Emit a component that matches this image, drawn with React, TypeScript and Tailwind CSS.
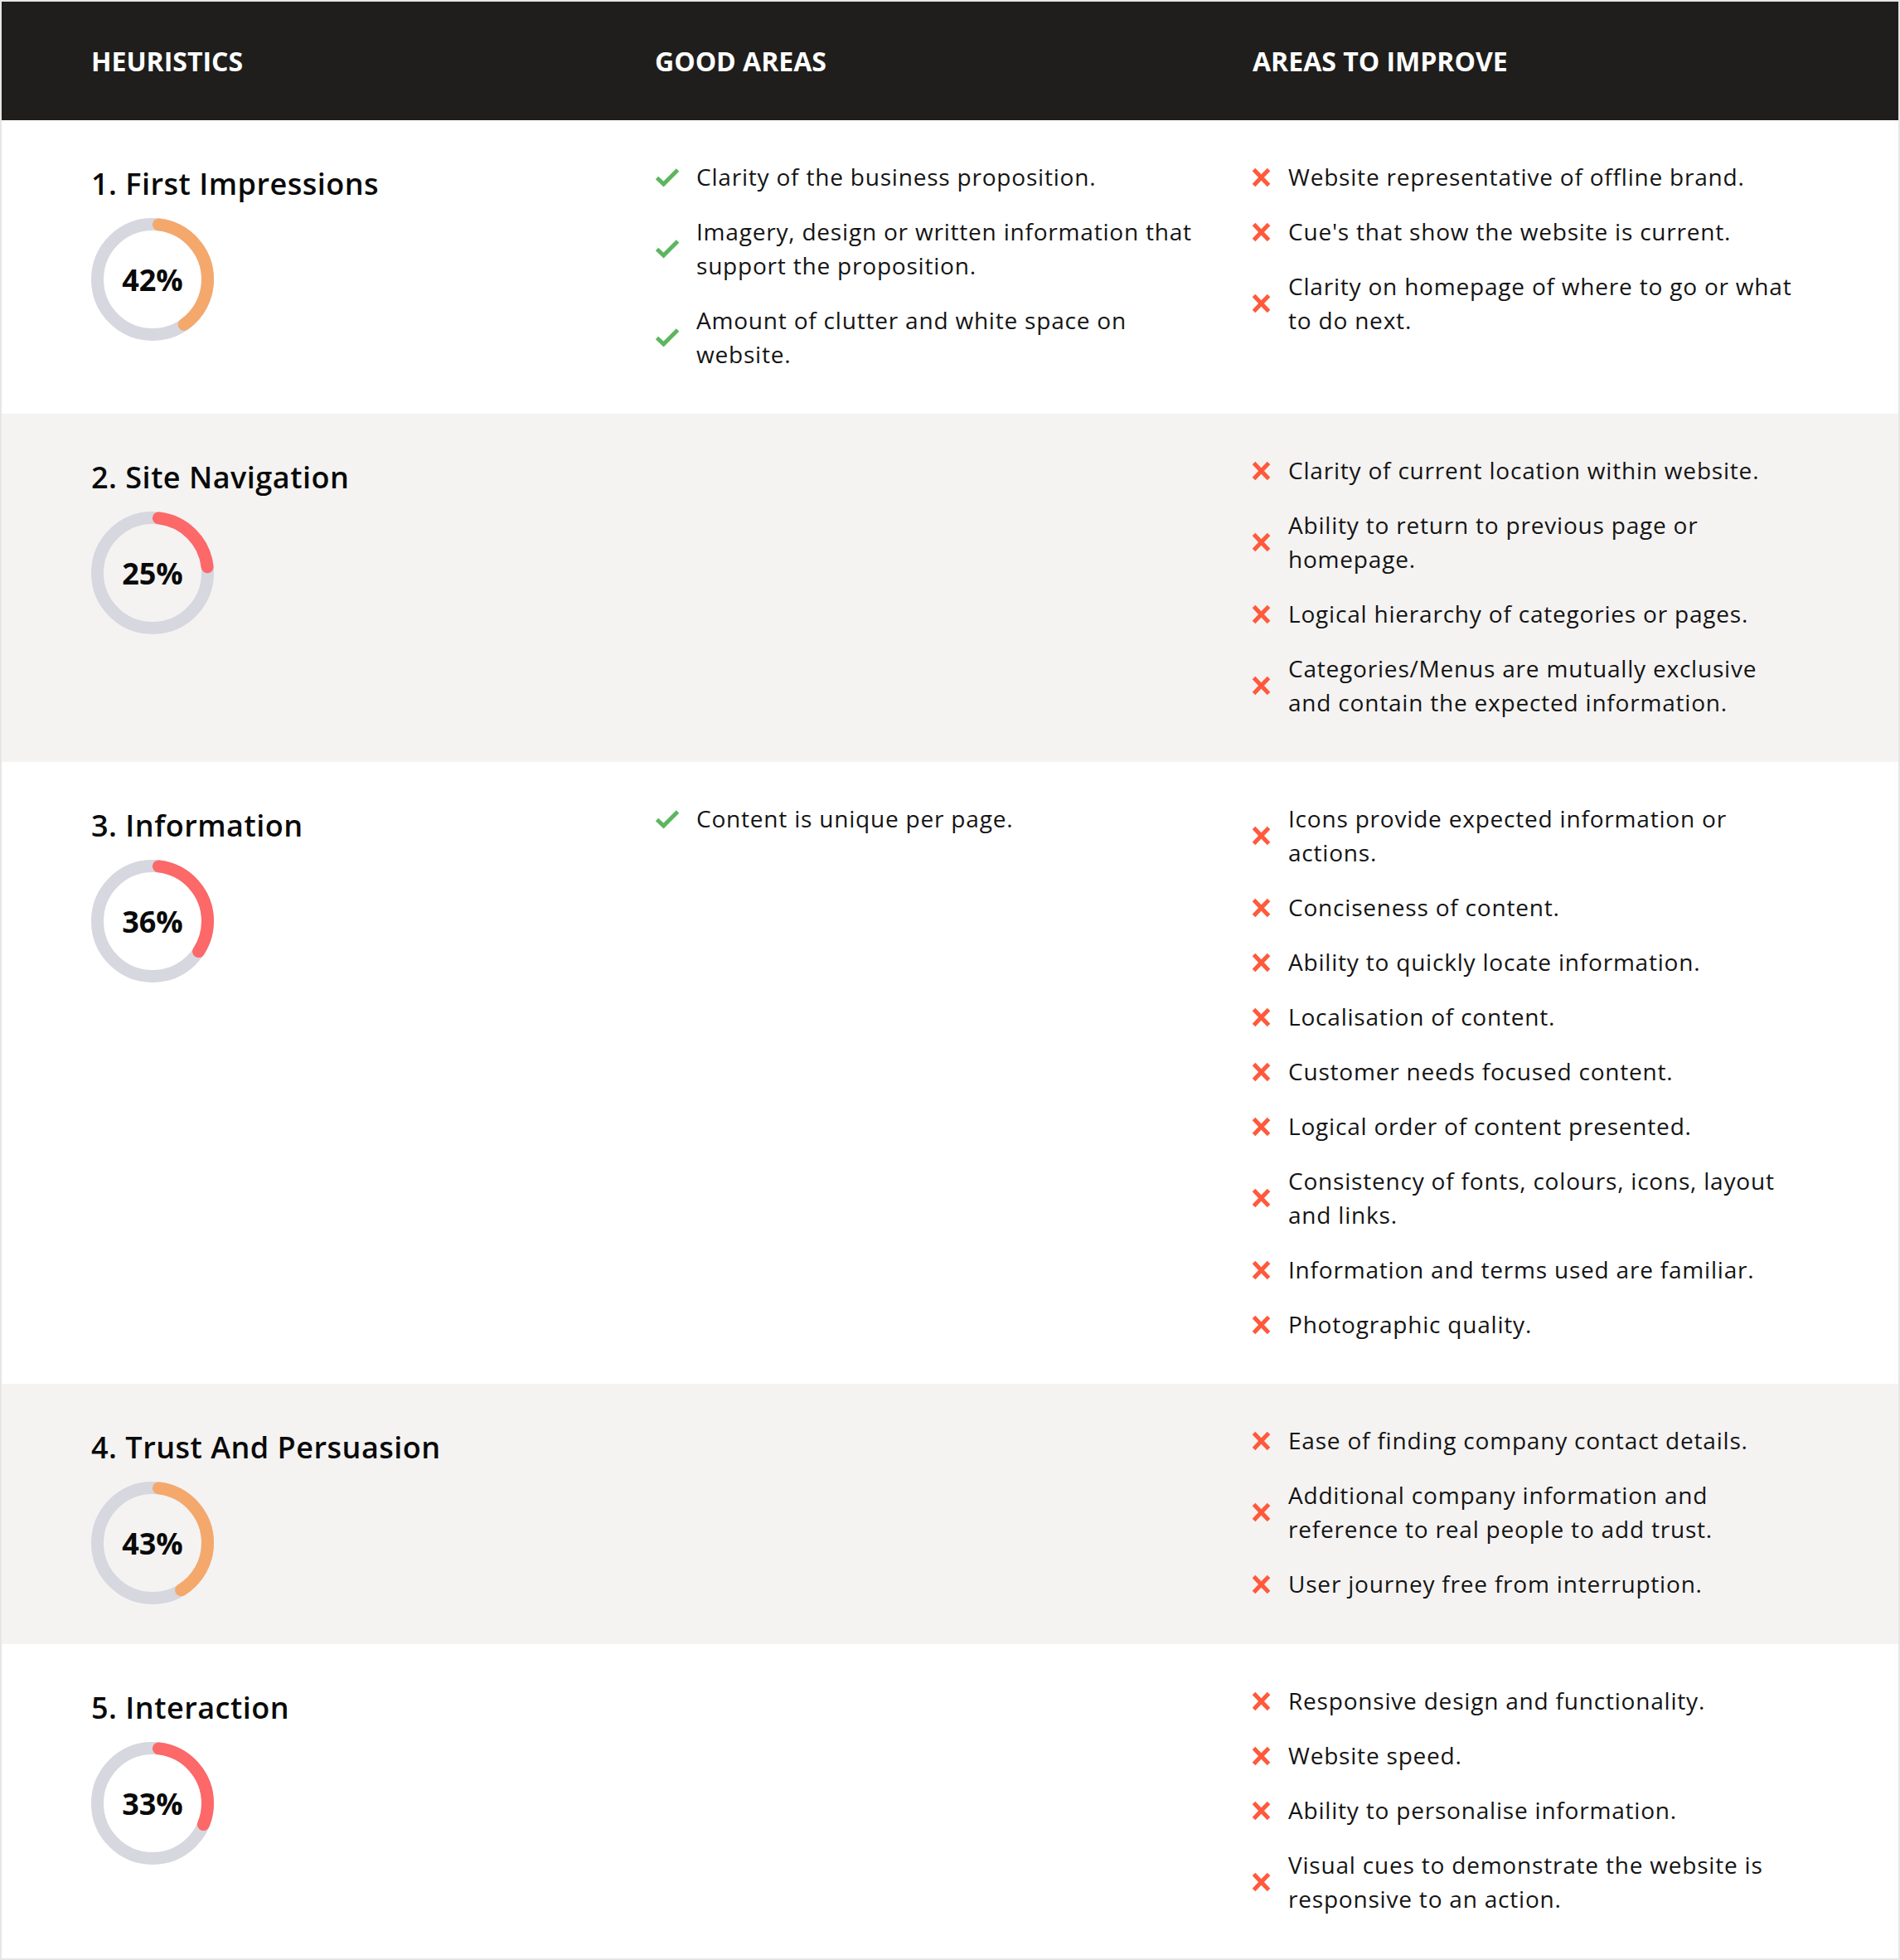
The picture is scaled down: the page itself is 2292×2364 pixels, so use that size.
import React from "react";

type Row = {
  title: string;
  pct: number;
  good: string[][];
  improve: string[][];
};

const rows: Row[] = [
  {
    title: "1. First Impressions",
    pct: 42,
    good: [
      ["Clarity of the business proposition."],
      ["Imagery, design or written information that", "support the proposition."],
      ["Amount of clutter and white space on", "website."],
    ],
    improve: [
      ["Website representative of offline brand."],
      ["Cue's that show the website is current."],
      ["Clarity on homepage of where to go or what", "to do next."],
    ],
  },
  {
    title: "2. Site Navigation",
    pct: 25,
    good: [],
    improve: [
      ["Clarity of current location within website."],
      ["Ability to return to previous page or", "homepage."],
      ["Logical hierarchy of categories or pages."],
      ["Categories/Menus are mutually exclusive", "and contain the expected information."],
    ],
  },
  {
    title: "3. Information",
    pct: 36,
    good: [["Content is unique per page."]],
    improve: [
      ["Icons provide expected information or", "actions."],
      ["Conciseness of content."],
      ["Ability to quickly locate information."],
      ["Localisation of content."],
      ["Customer needs focused content."],
      ["Logical order of content presented."],
      ["Consistency of fonts, colours, icons, layout", "and links."],
      ["Information and terms used are familiar."],
      ["Photographic quality."],
    ],
  },
  {
    title: "4. Trust And Persuasion",
    pct: 43,
    good: [],
    improve: [
      ["Ease of finding company contact details."],
      ["Additional company information and", "reference to real people to add trust."],
      ["User journey free from interruption."],
    ],
  },
  {
    title: "5. Interaction",
    pct: 33,
    good: [],
    improve: [
      ["Responsive design and functionality."],
      ["Website speed."],
      ["Ability to personalise information."],
      ["Visual cues to demonstrate the website is", "responsive to an action."],
    ],
  },
];

function Donut({ pct }: { pct: number }) {
  const r = 66.5;
  const c = 2 * Math.PI * r;
  const sw = 15;
  const len = Math.max((pct / 100) * c - sw, 0);
  const color = pct >= 40 ? "#f5a86c" : "#fd6868";
  return (
    <div className="relative w-[148px] h-[148px]">
      <svg width="148" height="148" viewBox="0 0 148 148" className="block">
        <circle cx="74" cy="74" r={r} fill="none" stroke="#d6d7df" strokeWidth={sw} />
        <circle
          cx="74"
          cy="74"
          r={r}
          fill="none"
          stroke={color}
          strokeWidth={sw}
          strokeLinecap="round"
          transform="rotate(-90 74 74)"
          style={{ strokeDasharray: `${len} ${c}`, strokeDashoffset: -sw / 2 }}
        />
      </svg>
      <div className="absolute inset-0 flex items-center justify-center pt-[2px] text-[36px] font-bold text-[#0a0a0a] leading-none">
        {pct}%
      </div>
    </div>
  );
}

function Check() {
  return (
    <svg width="30" height="24" viewBox="0 0 30 24" className="block">
      <path d="M2.5 12.5 L10.5 20 L27.5 3" fill="none" stroke="#5db65f" strokeWidth="5" />
    </svg>
  );
}

function Cross() {
  return (
    <svg width="23" height="24" viewBox="0 0 23 24" className="block">
      <path d="M2.5 2.5 L20.5 21.5 M20.5 2.5 L2.5 21.5" fill="none" stroke="#ff5a3c" strokeWidth="5" />
    </svg>
  );
}

function List({ items, kind }: { items: string[][]; kind: "good" | "bad" }) {
  return (
    <ul className="flex flex-col gap-[25px] mb-[4px]">
      {items.map((lines, i) => (
        <li key={i} className="flex items-center">
          <div className={kind === "good" ? "w-[50px] shrink-0" : "w-[44px] shrink-0 -ml-[1px]"}>
            {kind === "good" ? <Check /> : <Cross />}
          </div>
          <div className="text-[28px] leading-[41px] tracking-[0.8px] text-[#141414] whitespace-nowrap">
            {lines.map((l, j) => (
              <div key={j}>{l}</div>
            ))}
          </div>
        </li>
      ))}
    </ul>
  );
}

export default function App() {
  return (
    <div className="w-[2292px] bg-white font-['Open_Sans','Noto_Sans',sans-serif]">
      <div className="border-2 border-[#e6e6e6]">
        <div className="bg-[#1f1e1c] h-[143px] px-[108px] grid grid-cols-[640px_681px_1fr] gap-x-[40px] items-center text-white text-[32px] font-bold">
          <div>HEURISTICS</div>
          <div>GOOD AREAS</div>
          <div>AREAS TO IMPROVE</div>
        </div>
        {rows.map((row, i) => (
          <div
            key={i}
            className={`${i % 2 === 1 ? "bg-[#f4f3f2]" : "bg-white"} px-[108px] pt-[48px] pb-[47px] grid grid-cols-[640px_681px_1fr] gap-x-[40px] items-start`}
          >
            <div className="flex flex-col">
              <div className="text-[36px] leading-[58px] tracking-[0.5px] font-semibold text-[#0a0a0a]">{row.title}</div>
              <div className="mt-[12px] mb-[1px]">
                <Donut pct={row.pct} />
              </div>
            </div>
            <div>{row.good.length > 0 && <List items={row.good} kind="good" />}</div>
            <div>
              <List items={row.improve} kind="bad" />
            </div>
          </div>
        ))}
      </div>
    </div>
  );
}
